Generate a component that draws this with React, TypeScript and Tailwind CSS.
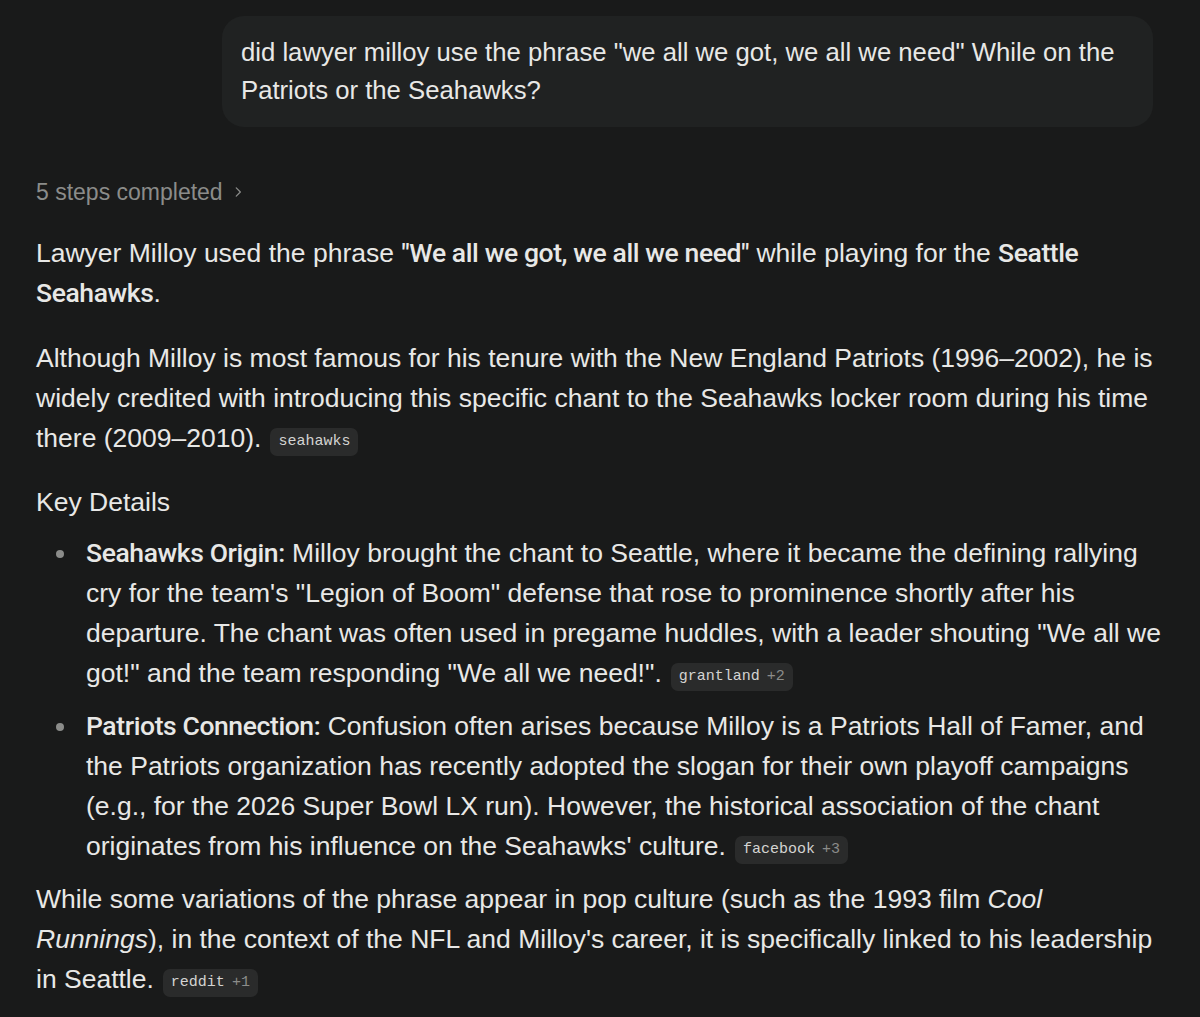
import React from "react";

const Cite = ({ name, more }: { name: string; more?: string }) => (
  <span className="ml-[9px] inline-flex h-[28px] items-center rounded-[7px] bg-[#2a2b2b] px-[8px] align-[2px] font-['Liberation_Mono',monospace] text-[15px] leading-none tracking-normal text-[#d4d4d2]">
    {name}
    {more && <span className="ml-[7px] text-[#8b8c8a]">{more}</span>}
  </span>
);

const B = ({ children }: { children: React.ReactNode }) => (
  <strong className="font-['Roboto',sans-serif] font-medium tracking-[-0.4px]">{children}</strong>
);

const Bullet = ({ children }: { children: React.ReactNode }) => (
  <li className="flex">
    <span className="flex w-[50px] shrink-0 justify-start pl-[20px] pt-[17px]">
      <span className="h-[8px] w-[8px] rounded-full bg-[#8b8c8a]" />
    </span>
    <div>{children}</div>
  </li>
);

const App = () => {
  return (
    <div className="min-h-[1017px] w-full bg-[#191a1a] font-['Liberation_Sans',Arial,sans-serif] text-[#e8e8e6]">
      <div className="px-[36px] pt-[16px]">
        <div className="flex justify-end pr-[11px]">
          <div className="w-[931px] rounded-[22px] bg-[#202222] px-[19px] pb-[18px] pt-[17px] text-[25.7px] leading-[38px]">
            did lawyer milloy use the phrase "we all we got, we all we need" While on the Patriots or the Seahawks?
          </div>
        </div>

        <div className="mt-[50px] flex items-center gap-[8px] text-[23px] leading-[30px] text-[#8b8c8a]">
          5 steps completed
          <svg width="14" height="14" viewBox="0 0 24 24" fill="none" stroke="currentColor" strokeWidth="2.2" strokeLinecap="round" strokeLinejoin="round">
            <path d="M9 5l7 7-7 7" />
          </svg>
        </div>

        <div className="-mr-[6px] mt-[26px] text-[26.5px] leading-[40px]">
          <p>
            Lawyer Milloy used the phrase <B>"We all we got, we all we need"</B> while playing for the <B>Seattle Seahawks</B>.
          </p>
          <p className="mt-[25px]">
            Although Milloy is most famous for his tenure with the New England Patriots (1996–2002), he is widely credited with introducing this specific chant to the Seahawks locker room during his time there (2009–2010).
            <Cite name="seahawks" />
          </p>
          <h2 className="mt-[24px]">Key Details</h2>
          <ul className="mt-[11px] flex flex-col gap-[13px]">
            <Bullet>
              <B>Seahawks Origin:</B> Milloy brought the chant to Seattle, where it became the defining rallying cry for the team's "Legion of Boom" defense that rose to prominence shortly after his departure. The chant was often used in pregame huddles, with a leader shouting "We all we got!" and the team responding "We all we need!".
              <Cite name="grantland" more="+2" />
            </Bullet>
            <Bullet>
              <B>Patriots Connection:</B> Confusion often arises because Milloy is a Patriots Hall of Famer, and the Patriots organization has recently adopted the slogan for their own playoff campaigns (e.g., for the 2026 Super Bowl LX run). However, the historical association of the chant originates from his influence on the Seahawks' culture.
              <Cite name="facebook" more="+3" />
            </Bullet>
          </ul>
          <p className="mt-[13px]">
            While some variations of the phrase appear in pop culture (such as the 1993 film <em>Cool Runnings</em>), in the context of the NFL and Milloy's career, it is specifically linked to his leadership in Seattle.
            <Cite name="reddit" more="+1" />
          </p>
        </div>
      </div>
    </div>
  );
};

export default App;
